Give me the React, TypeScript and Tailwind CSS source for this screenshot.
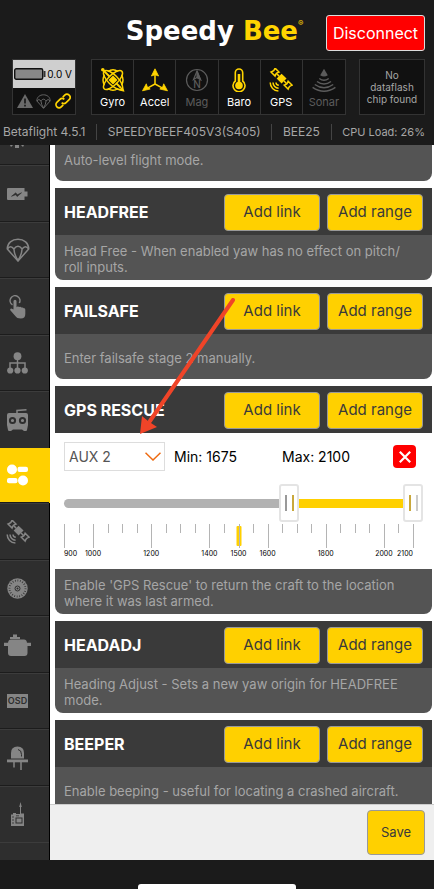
import type { ReactNode } from 'react';

const iconProps = {
  fill: 'none',
  stroke: 'currentColor',
  strokeWidth: 1.5,
  'aria-hidden': true,
};

function SatelliteIcon() {
  return (
    <svg {...iconProps} className="size-6" viewBox="0 0 24 24">
      <g transform="translate(12.6 10.6) rotate(45)">
        <path d="M-3.5-3.5h7v7h-7z" fill="currentColor" stroke="none" />
        <path d="M-12-2.800h5.500q-1.600 2.800 0 5.600h-5.500q1.600-2.800 0-5.600zM6.500-2.800h5.500q-1.600 2.800 0 5.600h-5.500q1.600-2.800 0-5.600z" />
        <path d="M-6.500 0h3M3.500 0h3" />
      </g>
      <path d="M7 14.500a3 3 0 0 0 2.800 2.800M4 14.500a5.800 5.800 0 0 0 5.600 5.700M1.200 14.500a8.500 8.500 0 0 0 8.200 8.500" />
    </svg>
  );
}

function GyroIcon() {
  return (
    <svg {...iconProps} className="size-6" viewBox="0 0 24 24" strokeWidth="1.500">
      <ellipse cx="12" cy="12" rx="12.500" ry="5" transform="rotate(45 12 12)" />
      <ellipse cx="12" cy="12" rx="12.500" ry="5" transform="rotate(-45 12 12)" />
      <path d="M7 3.500q5-3.500 10 0M7 20.500q5 3.500 10 0M3.500 7q-3 5 0 10M20.500 7q3 5 0 10" />
      <path d="M2 2l7 7M15 15l5 5" strokeWidth="1.800" />
      <path d="M12 7.500l4.500 4.500-4.500 4.500-4.500-4.500zM23.500 23.800l-5.500-1.400 4-4zM0 1.800a1.800 1.800 0 1 0 3.600 0a1.800 1.800 0 1 0-3.600 0z" fill="currentColor" stroke="none" />
    </svg>
  );
}

function AccelIcon() {
  return (
    <svg {...iconProps} className="h-6 w-[26px]" viewBox="0 0 26 24">
      <path d="M13 6v10M13 16l-8 4.300M13 16l8 4.300" />
      <path d="M13 .8l3.600 7.200-3.600-1.200-3.600 1.200zM.5 22.800l3.800-7 1 3.200 2.900 2zM25.500 22.800l-3.800-7-1 3.200-2.900 2z" fill="currentColor" stroke="currentColor" strokeWidth=".8" />
    </svg>
  );
}

function MagIcon() {
  return (
    <svg {...iconProps} className="size-6" viewBox="0 0 24 24" strokeWidth="1.200">
      <circle cx="12" cy="12" r="10.500" />
      <path d="M8.500 11.500L12 3l3.500 8.500L12 9.500z" />
      <path d="M12 3v6.500l3.500 2z" fill="currentColor" />
      <text x="12" y="20" textAnchor="middle" fontSize="10" fontFamily="Inter" fontWeight="500" fill="currentColor" stroke="none">N</text>
    </svg>
  );
}

function BaroIcon() {
  return (
    <svg {...iconProps} className="size-6" viewBox="0 0 24 24">
      <path d="M8.300 13V4.700a3.700 3.700 0 0 1 7.400 0V13a6 6 0 1 1-7.400 0z" strokeWidth="1.600" />
      <circle cx="12" cy="17.500" r="3.800" fill="currentColor" stroke="none" />
      <path d="M12 6v10" strokeWidth="2.600" />
    </svg>
  );
}

function SonarIcon() {
  return (
    <svg {...iconProps} className="size-6" viewBox="0 0 24 24">
      <path d="M12 .8l3.800 6.500q-3.800 2.400-7.600 0z" fill="currentColor" stroke="none" />
      <path d="M7.300 10.500q4.700 3.400 9.400 0M5 13.500q7 5.200 14 0M2.800 16.500q9.200 6.600 18.400 0M.6 19.300q11.400 7.800 22.800 0" />
    </svg>
  );
}

function ParachuteIcon({ className }: { className: string }) {
  return (
    <svg {...iconProps} className={className} viewBox="0 0 24 24">
      <path d="M1.300 11C1.300 5 6 1.300 12 1.300S22.700 5 22.700 11L12 23z" strokeLinejoin="round" />
      <path d="M1.300 11q3.300-4.500 6.600 0 4.100-5.500 8.200 0 3.300-4.500 6.600 0M7.900 11q.5 6 4.100 11.500Q15.600 17 16.100 11" />
    </svg>
  );
}

function PowerIcon() {
  return (
    <svg {...iconProps} className="h-3 w-[21px]" viewBox="0 0 21 12">
      <path d="M0 1q0-1 1-1h16.500v3.500h3v5h-3V12H1q-1 0-1-1z" fill="currentColor" stroke="none" />
      <path d="M4.500 8.300l4.300-3.500 1.400 2 4.300-2-4.300 3.800-1.500-1.900z" fill="#2e2e2e" stroke="#2e2e2e" strokeWidth=".6" />
    </svg>
  );
}

function TouchIcon() {
  return (
    <svg {...iconProps} className="h-6 w-5" viewBox="0 0 20 24">
      <path d="M4.500 9.800A4.900 4.900 0 1 1 11.300 8" />
      <path d="M5.500 6.300q0-1.600 1.500-1.600t1.500 1.600v6l1-.8q1-.4 1.700.6 1.300-.9 2.300.5 1.600-.6 2.300.7 1.500-.2 1.500 1.400V19q0 4.500-4.500 4.500-4 0-5.500-2.500l-5-5.700q-.6-1.600 1-1.700l2.200 1z" fill="currentColor" stroke="none" />
    </svg>
  );
}

function FailsafeIcon() {
  return (
    <svg {...iconProps} className="h-[22px] w-[21px]" viewBox="0 0 21 22">
      <path d="M10.500 6v11M3 17v-6h15v6" />
      <g fill="currentColor" stroke="none">
        <circle cx="10.500" cy="4.200" r="3.900" />
        <circle cx="3.200" cy="18.500" r="3.100" />
        <circle cx="10.500" cy="18.500" r="3.100" />
        <circle cx="17.800" cy="18.500" r="3.100" />
      </g>
    </svg>
  );
}

function ReceiverIcon() {
  return (
    <svg {...iconProps} className="h-[22px] w-[21px]" viewBox="0 0 21 22">
      <path d="M10 5V1.500L19.500.8" />
      <path d="M2 4h17q2 0 2 2v10l-1 5q-.2 1-1 1h-2l-2-1.500H6L4 22H2q-.8 0-1-1L0 16V6q0-2 2-2z" fill="currentColor" stroke="none" />
      <g stroke="#2e2e2e" strokeWidth="2">
        <circle cx="5.500" cy="11.500" r="2.600" />
        <circle cx="15.500" cy="11.500" r="2.600" />
      </g>
    </svg>
  );
}

function ModesIcon() {
  return (
    <svg {...iconProps} className="h-[22px] w-[21px]" viewBox="0 0 21 22">
      <g fill="currentColor" stroke="none">
        <circle cx="5" cy="5.500" r="5" />
        <rect x="10.500" y="2.800" width="10.500" height="5.200" rx="2" />
        <circle cx="16" cy="16.500" r="5" />
        <rect x="0" y="14" width="10.500" height="5.200" rx="2" />
      </g>
    </svg>
  );
}

function MotorIcon() {
  return (
    <svg {...iconProps} className="size-[21px]" viewBox="0 0 21 21">
      <circle cx="10.500" cy="10.500" r="10.200" fill="currentColor" stroke="none" />
      <circle cx="10.500" cy="10.500" r="8" stroke="#2e2e2e" strokeWidth="2" strokeDasharray=".7 1.800" />
      <circle cx="10.500" cy="10.500" r="2.500" stroke="#2e2e2e" strokeWidth="1" />
      <circle cx="10.500" cy="10.500" r="1" fill="#2e2e2e" stroke="none" />
    </svg>
  );
}

function PotIcon() {
  return (
    <svg {...iconProps} className="h-[22px] w-[27px]" viewBox="0 0 27 22">
      <path d="M6 5V3h3V.5h4V3h3v2z" fill="currentColor" stroke="none" />
      <path d="M7 5.500h13q2.500 0 3 3.300h4v3.200h-3.500v7q0 3-3 3H7q-3 0-3-3v-7H0V8.800h4q.5-3.300 3-3.300z" fill="currentColor" stroke="none" />
    </svg>
  );
}

function LedIcon() {
  return (
    <svg {...iconProps} className="h-6 w-[21px]" viewBox="0 0 21 24">
      <path d="M4 12.500V7Q4 .5 10.500.5T17 7v5.500z" fill="currentColor" stroke="none" />
      <path d="M0 13.500h21v2.800H0z" fill="currentColor" stroke="none" />
      <path d="M7 16v5.500M14 16v8" />
      <path d="M11 3.500q3.500.5 3.500 5v2" stroke="#2e2e2e" strokeWidth="1" />
    </svg>
  );
}

function TransmitterIcon() {
  return (
    <svg {...iconProps} className="h-6 w-[13px]" viewBox="0 0 13 24">
      <path d="M9.500 0l1.300 5H10v6.500h3V24H0V12.500h2V11h3v1h4V5h-.8z" fill="currentColor" stroke="none" />
      <rect x="5" y="16" width="6" height="5" stroke="#2e2e2e" strokeWidth="1" />
      <path d="M1 15h2M1 18h2M1 21h2M5 13.800h3" stroke="#2e2e2e" strokeWidth=".8" />
    </svg>
  );
}

const tabs: { name: string; icon: ReactNode }[] = [
  { name: 'Power', icon: <PowerIcon /> },
  { name: 'Failsafe', icon: <ParachuteIcon className="size-6" /> },
  { name: 'Presets', icon: <TouchIcon /> },
  { name: 'PID', icon: <FailsafeIcon /> },
  { name: 'Receiver', icon: <ReceiverIcon /> },
  { name: 'Modes', icon: <ModesIcon /> },
  { name: 'GPS', icon: <SatelliteIcon /> },
  { name: 'Motors', icon: <MotorIcon /> },
  { name: 'Blackbox', icon: <PotIcon /> },
  {
    name: 'OSD',
    icon: (
      <span className="w-[21px] bg-[#858585] text-center text-[9px] leading-[14px] font-semibold text-[#2e2e2e]">OSD</span>
    ),
  },
  { name: 'LED', icon: <LedIcon /> },
  { name: 'Video transmitter', icon: <TransmitterIcon /> },
];

const sensors = [
  { name: 'Gyro', icon: <GyroIcon />, on: true },
  { name: 'Accel', icon: <AccelIcon />, on: true },
  { name: 'Mag', icon: <MagIcon />, on: false },
  { name: 'Baro', icon: <BaroIcon />, on: true },
  { name: 'GPS', icon: <SatelliteIcon />, on: true },
  { name: 'Sonar', icon: <SonarIcon />, on: false },
];

const MIN = 900;
const MAX = 2100;
const majors = [900, 1000, 1200, 1400, 1500, 1600, 1800, 2000, 2100];
const ticks = Array.from({ length: 25 }, (_, i) => MIN + i * 50);
const percent = (value: number) => `${((value - MIN) / (MAX - MIN)) * 100}%`;

function Header() {
  return (
    <header className="bg-[#1b1b1b]">
      <div className="flex items-start justify-end gap-7 pt-[15px] pr-[9px]">
        <h1 className="relative font-['DejaVu_Sans'] text-[26px] leading-8 font-bold whitespace-nowrap text-white">
          Speedy <span className="text-[#ffd400]">Bee</span>
          <sup className="absolute top-1 left-full font-['Inter'] text-[8px] leading-none font-normal text-[#ffd400]">®</sup>
        </h1>
        <button className="h-9 w-[99px] rounded-[3px] border border-[#ddd] bg-[#f00] text-[16px] text-white">Disconnect</button>
      </div>

      <div className="mt-2 flex h-14 pr-[9px] pl-3">
        <div className="flex w-16 flex-col border border-[#333] bg-[#111]">
          <div className="flex h-7 items-center justify-between bg-[#cfcfcf] pr-[3px] pl-px text-[10px] text-black">
            <svg className="h-3 w-8" viewBox="0 0 32 12" aria-hidden="true">
              <rect x=".7" y=".7" width="28" height="10.600" rx="1.500" fill="#888" stroke="#111" strokeWidth="1.400" />
              <path d="M29.500 3h2v6h-2z" fill="#333" />
            </svg>
            0.0 V
          </div>
          <div className="flex flex-1 items-center justify-around px-0.5 text-[#6a6a6a]">
            <svg className="size-4" viewBox="0 0 16 16" aria-hidden="true">
              <path d="M8 1l8 14H0z" fill="currentColor" />
              <path d="M8 5.500v5M8 11.800v1.600" stroke="#111" strokeWidth="1.500" />
            </svg>
            <ParachuteIcon className="size-[15px]" />
            <svg className="size-4 text-[#ffd400]" viewBox="0 0 24 24" fill="none" stroke="currentColor" strokeWidth="2.500" aria-hidden="true">
              <path d="M10 14.500a4.600 4.600 0 0 0 6.600 0l4.600-4.600a4.600 4.600 0 0 0-6.600-6.600l-3 3M14 9.500a4.600 4.600 0 0 0-6.600 0l-4.600 4.600a4.600 4.600 0 0 0 6.600 6.600l3-3" />
            </svg>
          </div>
        </div>

        <ul className="ml-[15px] grid flex-1 grid-cols-6 divide-x divide-[#333] border border-[#333] bg-[#111]">
          {sensors.map((sensor) => (
            <li
              key={sensor.name}
              className={sensor.on ? 'flex flex-col items-center pt-2 text-[#ffd400]' : 'flex flex-col items-center pt-2 text-[#5c5c5c]'}
            >
              {sensor.icon}
              <span className={sensor.on ? 'mt-0.5 text-[11px] leading-4 text-white' : 'mt-0.5 text-[11px] leading-4'}>{sensor.name}</span>
            </li>
          ))}
        </ul>

        <p className="ml-[13px] flex w-[66px] items-center justify-center border border-[#333] bg-[#111] text-center text-[10px] leading-3 text-[#a6a6a6]">
          No
          <br />
          dataflash
          <br />
          chip found
        </p>
      </div>

      <div className="flex h-[30px] items-center justify-between pt-1 pr-[9px] pl-[3px] text-[12px] whitespace-nowrap text-[#a6a6a6]">
        <span>Betaflight 4.5.1</span>
        <span className="h-4 w-px bg-[#444]" />
        <span>SPEEDYBEEF405V3(S405)</span>
        <span className="h-4 w-px bg-[#444]" />
        <span>BEE25</span>
        <span className="h-4 w-px bg-[#444]" />
        <span className="text-[11px]">CPU Load: 26%</span>
      </div>
    </header>
  );
}

function Sidebar() {
  return (
    <nav className="flex w-[50px] shrink-0 flex-col border-r border-black bg-[#2e2e2e] text-[#858585]">
      <div className="flex h-5 w-[34px] justify-center">
        <svg className="h-1 w-4" viewBox="0 0 16 4" fill="currentColor" aria-hidden="true">
          <path d="M1 0h3L2 2zM6 0h4v3H6zM12 0h3l-1 2z" />
        </svg>
      </div>
      {tabs.map((tab) => (
        <a
          key={tab.name}
          href="#"
          aria-label={tab.name}
          aria-current={tab.name === 'Modes' ? 'page' : undefined}
          className={
            tab.name === 'Modes'
              ? '-mr-px flex flex-1 items-center bg-[#ffd000] text-white'
              : 'flex flex-1 items-center border-t border-[#3c3c3c] shadow-[0_-1px_0_#1c1c1c]'
          }
        >
          <span className="flex w-[35px] justify-center">{tab.icon}</span>
        </a>
      ))}
      <div className="h-[18px] border-t border-[#3c3c3c]" />
    </nav>
  );
}

function Description({ children }: { children: ReactNode }) {
  return (
    <p className="flex h-[45px] items-center rounded-b-lg bg-[#545454] pt-[3px] pr-4 pl-[9px] text-[13px] leading-4 text-[#a6a6a6]">
      <span>{children}</span>
    </p>
  );
}

function ModeCard({ name, description, children }: { name: string; description: ReactNode; children?: ReactNode }) {
  return (
    <section className="relative">
      <div className="flex h-[47px] items-center gap-[7px] bg-[#3a3a3a] pt-px pr-[9px] pl-[9px]">
        <h2 className="flex-1 text-[16px] font-bold text-white">{name}</h2>
        <button className="h-[37px] w-24 rounded border border-[#999] bg-[#ffd000] text-[15px] text-[#3a3a3a]">Add link</button>
        <button className="h-[37px] w-24 rounded border border-[#999] bg-[#ffd000] text-[15px] text-[#3a3a3a]">Add range</button>
      </div>
      {children}
      <Description>{description}</Description>
    </section>
  );
}

function Thumb({ value, left, right }: { value: number; left: string; right: string }) {
  return (
    <span
      className="absolute top-0 flex h-[38px] w-5 -translate-x-1/2 items-center justify-center gap-[5px] rounded-[3px] border-2 border-[#e4e4e4] bg-white"
      style={{ left: percent(value) }}
    >
      <span className={left} />
      <span className={right} />
    </span>
  );
}

function RangeEditor() {
  return (
    <div className="h-[136px] pt-[9px] pr-[19px] pl-[9px] text-black">
      <div className="flex h-[29px] items-center text-[14px]">
        <div className="relative">
          <select aria-label="Channel" className="h-[29px] w-[101px] appearance-none border border-[#ddd] bg-white pl-1 text-[14px] text-[#555]">
            <option>AUX 2</option>
          </select>
          <svg className="pointer-events-none absolute top-2.5 right-1 h-[9px] w-4" viewBox="0 0 16 9" fill="none" stroke="#ee6a10" strokeWidth="1.500" aria-hidden="true">
            <path d="M.5 .8L8 8l7.500-7.200" />
          </svg>
        </div>
        <span className="ml-[9px] w-[108px]">Min: 1675</span>
        <span>Max: 2100</span>
        <button aria-label="Remove range" className="-mr-[3px] ml-auto flex size-[23px] items-center justify-center rounded bg-[#f00]">
          <svg className="size-3" viewBox="0 0 12 12" stroke="white" strokeWidth="2.200" aria-hidden="true">
            <path d="M.8 .8l10.400 10.400M11.200 .8L.8 11.200" />
          </svg>
        </button>
      </div>

      <div className="relative mt-[13px] flex h-[38px] items-center">
        <div className="h-[9px] w-full rounded-full bg-[#b2b2b2]" />
        <div className="absolute right-0 h-[9px] bg-[#ffd000]" style={{ left: percent(1675) }} />
        <Thumb value={1675} left="h-4 w-0.5 bg-[#999]" right="h-4 w-0.5 bg-[#c9a83c]" />
        <Thumb value={2100} left="h-4 w-0.5 bg-[#c9a83c]" right="h-4 w-0.5 bg-[#ccc]" />
        <input type="range" aria-label="Range minimum" min={MIN} max={MAX} step={25} defaultValue={1675} className="absolute left-0 h-full w-1/2 opacity-0" />
        <input type="range" aria-label="Range maximum" min={MIN} max={MAX} step={25} defaultValue={2100} className="absolute right-0 h-full w-1/2 opacity-0" />
      </div>

      <div className="relative mt-0.5 h-10 text-[7px] leading-3">
        <span className="absolute top-0.5 h-5 w-[5px] -translate-x-1/2 rounded-[1px] bg-[#ffd000]" style={{ left: percent(1500) }} />
        {ticks.map((tick) => (
          <span
            key={tick}
            className={majors.includes(tick) ? 'absolute top-0 h-6 w-px bg-[#b4b4b4]' : 'absolute top-0 h-[9px] w-px bg-[#b4b4b4]'}
            style={{ left: percent(tick) }}
          />
        ))}
        {majors.map((value) => (
          <span
            key={value}
            className={
              value === MIN
                ? 'absolute top-6'
                : value === MAX
                  ? 'absolute top-6 -translate-x-full'
                  : 'absolute top-6 -translate-x-1/2'
            }
            style={{ left: percent(value) }}
          >
            {value}
          </span>
        ))}
      </div>
    </div>
  );
}

export default function App() {
  return (
    <div className="flex h-screen flex-col overflow-hidden bg-[#1b1b1b] font-['Inter',sans-serif]">
      <Header />

      <div className="flex min-h-0 flex-1">
        <Sidebar />
        <div className="flex min-w-0 flex-1 flex-col bg-white">
          <main className="flex min-h-0 flex-1 flex-col gap-[7px] overflow-hidden pr-0.5 pl-[5px]">
            <p className="h-9 shrink-0 rounded-b-lg bg-[#545454] pt-[7px] pl-[9px] text-[13px] leading-4 text-[#a6a6a6]">
              Auto-level flight mode.
            </p>
            <ModeCard
              name="HEADFREE"
              description={
                <>
                  Head Free - When enabled yaw has no effect on pitch/
                  <wbr />
                  roll inputs.
                </>
              }
            />
            <ModeCard name="FAILSAFE" description="Enter failsafe stage 2 manually." />
            <ModeCard name="GPS RESCUE" description="Enable 'GPS Rescue' to return the craft to the location where it was last armed.">
              <RangeEditor />
              <svg className="pointer-events-none absolute -top-[88px] left-[84px] h-[137px] w-[97px]" viewBox="0 0 97 137" aria-hidden="true">
                <path d="M94 2L11 123" stroke="#f04428" strokeWidth="4" strokeLinecap="round" />
                <path d="M1 136l2-18 6 5 9 6z" fill="#f04428" />
              </svg>
            </ModeCard>
            <ModeCard name="HEADADJ" description="Heading Adjust - Sets a new yaw origin for HEADFREE mode." />
            <ModeCard name="BEEPER" description="Enable beeping - useful for locating a crashed aircraft." />
          </main>

          <footer className="flex h-14 shrink-0 items-center justify-end border-t border-[#ccc] bg-[#efefef] pr-[9px]">
            <button className="h-[45px] w-[58px] rounded border border-[#999] bg-[#ffd000] text-[13px] text-[#3a3a3a]">Save</button>
          </footer>
        </div>
      </div>

      <div className="flex h-[29px] items-end justify-center">
        <div className="h-[5px] w-[158px] rounded-t-[3px] bg-white" />
      </div>
    </div>
  );
}
